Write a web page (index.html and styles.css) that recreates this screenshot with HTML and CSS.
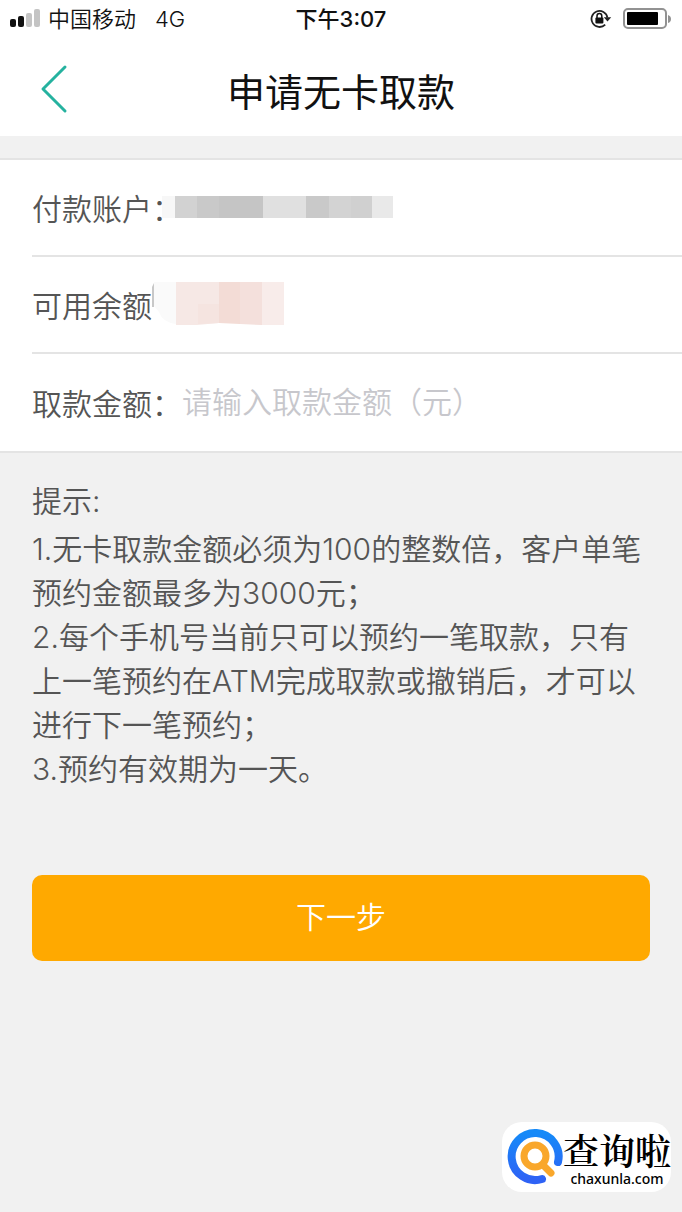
FILE: index.html
```html
<!DOCTYPE html>
<html lang="zh-CN">
<head>
<meta charset="utf-8">
<meta name="viewport" content="width=device-width, initial-scale=1">
<title>申请无卡取款</title>
<link rel="stylesheet" href="styles.css">
</head>
<body>
<div class="status">
  <div class="status-left">
    <svg class="signal" width="31" height="20" viewBox="0 0 31 20" aria-hidden="true">
      <rect x="0" y="10" width="6" height="8" rx="2" fill="#111"/>
      <rect x="8" y="7" width="6" height="11" rx="2" fill="#111"/>
      <rect x="16" y="4" width="6" height="14" rx="2" fill="#c4c4c4"/>
      <rect x="24" y="0" width="6" height="18" rx="2" fill="#c4c4c4"/>
    </svg>
    <span>中国移动</span>
    <span class="network">4G</span>
  </div>
  <div class="status-time">下午3:07</div>
  <div class="status-right">
    <svg width="22" height="20" viewBox="0 0 22 20" aria-hidden="true">
      <path d="M15.2 15.6A8 8 0 1 1 17.4 8.6" fill="none" stroke="#222" stroke-width="1.8"/>
      <path d="M13.8 8.2h7.4l-3.7 4.4z" fill="#222"/>
      <rect x="5.4" y="8.4" width="8" height="6" rx="1" fill="#111"/>
      <path d="M7 9V7a2.4 2.4 0 0 1 4.8 0V9" fill="none" stroke="#111" stroke-width="1.5"/>
    </svg>
    <svg width="49" height="22" viewBox="0 0 49 22" aria-hidden="true">
      <rect x="1" y="1" width="42" height="19" rx="4" fill="#fff" stroke="#929292" stroke-width="2"/>
      <rect x="4" y="4" width="31" height="13" rx="1" fill="#000"/>
      <path d="M45 7q3 1 3 4t-3 4z" fill="#929292"/>
    </svg>
  </div>
</div>
<header class="nav">
  <button class="back" type="button" aria-label="返回">
    <svg width="28" height="50" viewBox="0 0 28 50" aria-hidden="true">
      <path d="M25 3 3 25l22 22" fill="none" stroke="#25b29f" stroke-width="3" stroke-linecap="round" stroke-linejoin="round"/>
    </svg>
  </button>
  <h1 class="title">申请无卡取款</h1>
</header>
<form class="form">
  <div class="fields">
    <div class="row">
      <span>付款账户：</span>
      <svg class="account-mask" width="231" height="22" viewBox="0 0 231 22" role="img" aria-label="已隐藏">
        <path fill="#f7f7f7" d="M0 0h13v22H0z"/>
        <path fill="#d2d2d2" d="M13 0h22v22H13z"/>
        <path fill="#c9c9c9" d="M35 0h22v22H35z"/>
        <path fill="#c5c5c5" d="M57 0h44v22H57z"/>
        <path fill="#e0e0e0" d="M101 0h43v22h-43z"/>
        <path fill="#c9c9c9" d="M144 0h23v22h-23z"/>
        <path fill="#d3d3d3" d="M167 0h22v22h-22z"/>
        <path fill="#d0d0d0" d="M189 0h21v22h-21z"/>
        <path fill="#e9e9e9" d="M210 0h21v22h-21z"/>
      </svg>
    </div>
    <div class="row">
      <span>可用余额</span>
      <svg width="133" height="44" viewBox="0 0 133 44" role="img" aria-label="已隐藏">
        <path fill="#fafafa" d="M2 0h22v42q-14-2-17-12L2 24z"/>
        <path fill="#c8c8c8" d="M0 5 2 1v24H0z"/>
        <path fill="#f6e8e5" d="M24 0h43v41l-22 2H24z"/>
        <path fill="#f5e4e0" d="M46 22h21v19l-21 1z"/>
        <path fill="#f3dcd6" d="M67 0h21v42l-21-1z"/>
        <path fill="#f4e0dc" d="M88 0h22v43l-22-1z"/>
        <path fill="#f8ecea" d="M110 0h22v43h-22z"/>
      </svg>
    </div>
    <div class="row">
      <label for="amount">取款金额：</label>
      <input class="amount" id="amount" type="text" inputmode="decimal" placeholder="请输入取款金额（元）">
    </div>
  </div>
  <section class="tips">
    <h2 class="tips-title">提示:</h2>
    <p>1.无卡取款金额必须为100的整数倍，客户单笔<br>预约金额最多为3000元；</p>
    <p>2.每个手机号当前只可以预约一笔取款，只有<br>上一笔预约在ATM完成取款或撤销后，才可以<br>进行下一笔预约；</p>
    <p>3.预约有效期为一天。</p>
  </section>
  <button class="next" type="button">下一步</button>
</form>
<div class="watermark">
  <svg width="56" height="58" viewBox="0 0 56 58" aria-hidden="true">
    <defs>
      <linearGradient id="ring" x1="0" y1="0" x2="0" y2="1">
        <stop offset="0" stop-color="#168af8"/>
        <stop offset="1" stop-color="#2e62f5"/>
      </linearGradient>
    </defs>
    <path d="M51 34A23.5 23.5 0 1 0 35 51" fill="none" stroke="url(#ring)" stroke-width="8" stroke-linecap="round"/>
    <circle cx="28" cy="28" r="11" fill="none" stroke="#f9a72b" stroke-width="7"/>
    <path d="M36 37l8 8" stroke="#f9a72b" stroke-width="7" stroke-linecap="round"/>
  </svg>
  <div class="brand">
    <span class="brand-name">查询啦</span>
    <span class="brand-site">chaxunla.com</span>
  </div>
</div>
</body>
</html>
```
FILE: styles.css
```css
* {
  box-sizing: border-box;
}

body {
  position: relative;
  min-height: 100vh;
  margin: 0;
  background: #f1f1f1;
  color: #555;
  font-family: Inter, "Noto Sans CJK SC", sans-serif;
  font-size: 30px;
  font-weight: 350;
}

.status {
  display: grid;
  grid-template-columns: 1fr auto 1fr;
  align-items: center;
  height: 38px;
  padding: 0 10px;
  background: #fff;
  color: #111;
  font-size: 22px;
  font-weight: 350;
  line-height: 38px;
}

.status-left,
.status-right {
  display: flex;
  align-items: center;
}

.status-left {
  gap: 7px;
}

.network {
  margin-left: 12px;
}

.status-time {
  font-weight: 500;
}

.status-right {
  justify-content: flex-end;
  gap: 11px;
}

.nav {
  display: grid;
  grid-template-columns: 72px 1fr 72px;
  align-items: center;
  height: 98px;
  padding-top: 10px;
  background: #fff;
}

.back {
  display: flex;
  justify-content: flex-end;
  height: 60px;
  padding: 2px 4px;
  border: 0;
  background: none;
}

.title {
  margin: 0;
  color: #111;
  font-size: 38px;
  font-weight: 400;
  line-height: 56px;
  text-align: center;
}

.form {
  padding-top: 22px;
}

.fields {
  padding-left: 32px;
  border-top: 2px solid #e4e4e4;
  border-bottom: 2px solid #e4e4e4;
  background: #fff;
}

.row {
  display: flex;
  align-items: center;
  height: 97px;
  padding-bottom: 2px;
  border-bottom: 2px solid #e4e4e4;
}

.row:last-child {
  border-bottom: 0;
}

.account-mask {
  margin-left: -20px;
}

.amount {
  flex: 1;
  min-width: 0;
  padding: 0;
  border: 0;
  outline: 0;
  background: none;
  color: #555;
  font: inherit;
}

.amount::placeholder {
  color: #c7c7cc;
  opacity: 1;
}

.tips {
  padding: 26px 32px 0;
  line-height: 44px;
  white-space: nowrap;
}

.tips-title {
  margin: 0 0 4px;
  font-size: 30px;
  font-weight: 350;
}

.tips p {
  margin: 0;
}

.next {
  display: block;
  width: calc(100% - 64px);
  height: 86px;
  margin: 84px 32px 0;
  padding: 0 0 6px;
  border: 0;
  border-radius: 10px;
  background: #ffa900;
  color: #fff;
  font: inherit;
}

.watermark {
  position: absolute;
  right: 11px;
  bottom: 20px;
  display: flex;
  align-items: center;
  height: 70px;
  padding: 0 0 0 5px;
  border-radius: 20px;
  background: #fff;
  color: #000;
}

.brand {
  display: flex;
  flex-direction: column;
  align-items: center;
  padding-top: 4px;
}

.brand-name {
  font-family: "Noto Serif CJK SC", "Noto Sans CJK SC", serif;
  font-size: 36px;
  font-weight: 600;
  line-height: 40px;
}

.brand-site {
  font-family: "Noto Sans", sans-serif;
  font-size: 14px;
  font-weight: 500;
  line-height: 18px;
}
```
